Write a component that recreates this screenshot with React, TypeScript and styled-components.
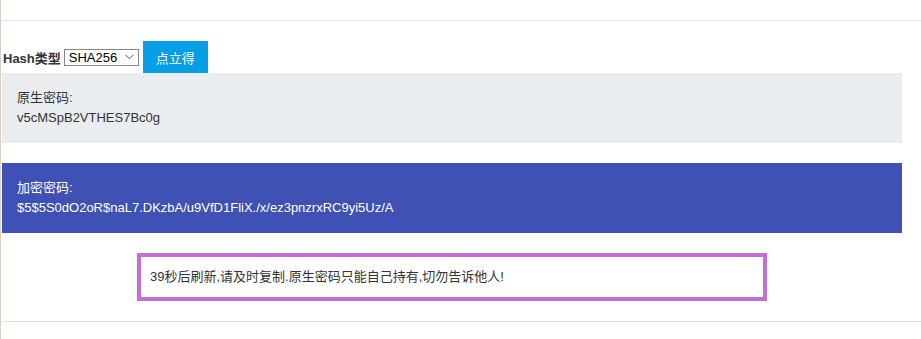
import React from 'react';
import styled, { createGlobalStyle } from 'styled-components';

const GlobalStyle = createGlobalStyle`
  body {
    margin: 0;
    font-family: "Liberation Sans", "Noto Sans CJK SC", sans-serif;
    font-size: 13px;
    color: #333;
    background: #fff;
  }
`;

const Page = styled.div`
  min-height: 339px;
  box-sizing: border-box;
  border-left: 1px solid #d9d1c1;
  padding: 20px 0 0 1px;
`;

const Divider = styled.div`
  height: 1px;
  background: #e2e2e2;
`;

const Content = styled.div`
  width: 900px;
  padding: 20px 0;
`;

const Toolbar = styled.div`
  display: flex;
  align-items: center;
  height: 32px;
  padding-left: 1px;
`;

const Label = styled.label`
  font-weight: bold;
  margin-right: 3px;
`;

const SelectWrap = styled.div`
  position: relative;
  margin-right: 4px;
`;

const Select = styled.select`
  display: block;
  appearance: none;
  width: 75px;
  height: 17px;
  box-sizing: border-box;
  border: 1px solid #888;
  border-radius: 0;
  background: #fff;
  padding: 0 0 0 4px;
  font-family: "Liberation Sans", sans-serif;
  font-size: 13px;
  line-height: 15px;
  color: #000;
  outline: none;
`;

const Chevron = styled.svg`
  position: absolute;
  right: 5px;
  top: 5px;
  pointer-events: none;
`;

const Button = styled.button`
  height: 32px;
  padding: 0 13px;
  border: none;
  background: #069fe6;
  color: #fff;
  font-family: "Liberation Sans", "Noto Sans CJK SC", sans-serif;
  font-size: 13px;
  cursor: pointer;
`;

const Panel = styled.div<{ $tone: 'plain' | 'accent' }>`
  padding: 15px;
  line-height: 20px;
  background: ${p => (p.$tone === 'accent' ? '#3f51b5' : '#eaedf0')};
  color: ${p => (p.$tone === 'accent' ? '#fff' : '#333')};
  & + & {
    margin-top: 20px;
  }
`;

const Notice = styled.div`
  width: 630px;
  box-sizing: border-box;
  margin: 20px auto 0;
  border: 4px solid #c46ddb;
  padding: 10px 9px;
  line-height: 20px;
`;

export default function App() {
  return (
    <>
      <GlobalStyle />
      <Page>
        <Divider />
        <Content>
          <Toolbar>
            <Label>Hash类型</Label>
            <SelectWrap>
              <Select defaultValue="SHA256">
                <option>MD5</option>
                <option>SHA1</option>
                <option>SHA256</option>
                <option>SHA512</option>
              </Select>
              <Chevron width="9" height="6" viewBox="0 0 9 6">
                <path d="M0.5 0.8 L4.5 4.8 L8.5 0.8" fill="none" stroke="#555" strokeWidth="1" />
              </Chevron>
            </SelectWrap>
            <Button>点立得</Button>
          </Toolbar>
          <Panel $tone="plain">
            原生密码:
            <br />
            v5cMSpB2VTHES7Bc0g
          </Panel>
          <Panel $tone="accent">
            加密密码:
            <br />
            $5$5S0dO2oR$naL7.DKzbA/u9VfD1FliX./x/ez3pnzrxRC9yi5Uz/A
          </Panel>
          <Notice>39秒后刷新,请及时复制.原生密码只能自己持有,切勿告诉他人!</Notice>
        </Content>
        <Divider />
      </Page>
    </>
  );
}
